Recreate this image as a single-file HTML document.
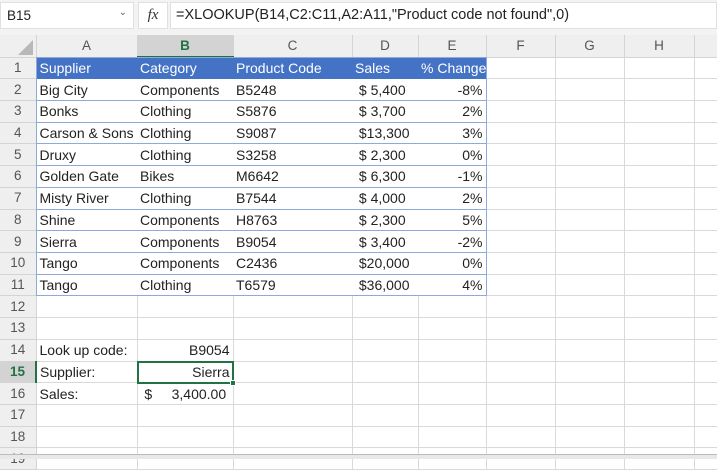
<!DOCTYPE html>
<html><head><meta charset="utf-8">
<style>
*{box-sizing:border-box;margin:0;padding:0}
body{width:717px;height:459px;overflow:hidden;background:#fff;font-family:"Liberation Sans",sans-serif;font-size:14px;color:#222;position:relative}
.fb{position:absolute;top:0;left:0;width:717px;height:35px;background:#f3f3f3}
.nb{position:absolute;left:0;top:2px;width:134px;height:27px;background:#fff;border:1px solid #e0e0e0;padding:5px 6px;font-size:13.5px}
.nb span{position:absolute;right:6px;top:4px;font-size:10px;color:#666}
.fx{position:absolute;left:138px;top:2px;width:30px;height:27px;background:#fff;border:1px solid #e0e0e0;text-align:center;font-family:"Liberation Serif",serif;font-style:italic;font-size:15px;padding-top:4px;color:#333}
.fi{position:absolute;left:170px;top:2px;width:547px;height:27px;background:#fff;border:1px solid #e0e0e0;padding:4px 5px;font-size:14.5px;white-space:nowrap}
table{position:absolute;top:35px;left:0;border-collapse:collapse;table-layout:fixed;width:717px}
td{height:21.73px;border-right:1px solid #d9d9d9;border-bottom:1px solid #d9d9d9;padding:0 3px;white-space:nowrap;overflow:hidden;line-height:20px}
tr.h td{height:22px;background:#efefef;text-align:center;color:#555;border-color:#d4d4d4;font-size:13.5px}
td.rh{background:#efefef;text-align:center;color:#555;border-color:#d4d4d4;padding:0;font-size:13.5px}
tr.h td.sel{background:#d3d3d3;color:#217346;font-weight:bold;border-bottom:2px solid #217346}
td.rsel{background:#d3d3d3;color:#217346;font-weight:bold;border-right:2px solid #217346}
.t1 td.t{background:#4472c4;color:#fff;border-right:none;border-bottom:1px solid #4472c4}
td.t{border-right:none;border-bottom:1px solid #8eaadb}
td.tl{border-right:1px solid #8eaadb !important}
.r{text-align:right}
.sb{position:absolute;left:0;top:454px;width:717px;height:5px;background:#e8e8e8;border-top:1px solid #bbb}
.selbox{position:absolute;left:137px;top:361px;width:97px;height:23px;border:2px solid #217346}
.hd{position:absolute;left:230px;top:380px;width:6px;height:6px;background:#217346;border:1px solid #fff}
.tri{position:absolute;left:18px;top:40px;width:0;height:0;border-left:15px solid transparent;border-bottom:15px solid #b8b8b8}
</style></head><body>
<div class="fb">
<div class="nb">B15<span>&#8964;</span></div>
<div class="fx">fx</div>
<div class="fi">=XLOOKUP(B14,C2:C11,A2:A11,"Product code not found",0)</div>
</div>
<table>
<colgroup><col style="width:36px"><col style="width:101px"><col style="width:96px"><col style="width:119px"><col style="width:66px"><col style="width:68px"><col style="width:69px"><col style="width:69px"><col style="width:70px"><col style="width:23px"></colgroup>
<tr class="h"><td></td><td>A</td><td class="sel">B</td><td>C</td><td>D</td><td>E</td><td>F</td><td>G</td><td>H</td><td></td></tr>
<tr class="t1"><td class="rh">1</td><td class="t">Supplier</td><td class="t">Category</td><td class="t">Product Code</td><td class="t">Sales</td><td class="t r tl">% Change</td><td></td><td></td><td></td><td></td></tr>
<tr><td class="rh">2</td><td class="t">Big City</td><td class="t">Components</td><td class="t">B5248</td><td class="t">&nbsp;$ 5,400</td><td class="t r tl">-8%</td><td></td><td></td><td></td><td></td></tr>
<tr><td class="rh">3</td><td class="t">Bonks</td><td class="t">Clothing</td><td class="t">S5876</td><td class="t">&nbsp;$ 3,700</td><td class="t r tl">2%</td><td></td><td></td><td></td><td></td></tr>
<tr><td class="rh">4</td><td class="t">Carson &amp; Sons</td><td class="t">Clothing</td><td class="t">S9087</td><td class="t">&nbsp;$13,300</td><td class="t r tl">3%</td><td></td><td></td><td></td><td></td></tr>
<tr><td class="rh">5</td><td class="t">Druxy</td><td class="t">Clothing</td><td class="t">S3258</td><td class="t">&nbsp;$ 2,300</td><td class="t r tl">0%</td><td></td><td></td><td></td><td></td></tr>
<tr><td class="rh">6</td><td class="t">Golden Gate</td><td class="t">Bikes</td><td class="t">M6642</td><td class="t">&nbsp;$ 6,300</td><td class="t r tl">-1%</td><td></td><td></td><td></td><td></td></tr>
<tr><td class="rh">7</td><td class="t">Misty River</td><td class="t">Clothing</td><td class="t">B7544</td><td class="t">&nbsp;$ 4,000</td><td class="t r tl">2%</td><td></td><td></td><td></td><td></td></tr>
<tr><td class="rh">8</td><td class="t">Shine</td><td class="t">Components</td><td class="t">H8763</td><td class="t">&nbsp;$ 2,300</td><td class="t r tl">5%</td><td></td><td></td><td></td><td></td></tr>
<tr><td class="rh">9</td><td class="t">Sierra</td><td class="t">Components</td><td class="t">B9054</td><td class="t">&nbsp;$ 3,400</td><td class="t r tl">-2%</td><td></td><td></td><td></td><td></td></tr>
<tr><td class="rh">10</td><td class="t">Tango</td><td class="t">Components</td><td class="t">C2436</td><td class="t">&nbsp;$20,000</td><td class="t r tl">0%</td><td></td><td></td><td></td><td></td></tr>
<tr><td class="rh">11</td><td class="t">Tango</td><td class="t">Clothing</td><td class="t">T6579</td><td class="t">&nbsp;$36,000</td><td class="t r tl">4%</td><td></td><td></td><td></td><td></td></tr>
<tr><td class="rh">12</td><td></td><td></td><td></td><td></td><td></td><td></td><td></td><td></td><td></td></tr>
<tr><td class="rh">13</td><td></td><td></td><td></td><td></td><td></td><td></td><td></td><td></td><td></td></tr>
<tr><td class="rh">14</td><td>Look up code:</td><td class="r">B9054</td><td></td><td></td><td></td><td></td><td></td><td></td><td></td></tr>
<tr><td class="rh rsel">15</td><td>Supplier:</td><td class="r">Sierra</td><td></td><td></td><td></td><td></td><td></td><td></td><td></td></tr>
<tr><td class="rh">16</td><td>Sales:</td><td>&nbsp;$&nbsp;&nbsp;&nbsp;&nbsp; 3,400.00</td><td></td><td></td><td></td><td></td><td></td><td></td><td></td></tr>
<tr><td class="rh">17</td><td></td><td></td><td></td><td></td><td></td><td></td><td></td><td></td><td></td></tr>
<tr><td class="rh">18</td><td></td><td></td><td></td><td></td><td></td><td></td><td></td><td></td><td></td></tr>
<tr><td class="rh">19</td><td></td><td></td><td></td><td></td><td></td><td></td><td></td><td></td><td></td></tr>
</table>
<div style="position:absolute;left:36px;top:57px;width:451px;height:239px;border:1px solid #8eaadb;pointer-events:none"></div>
<div class="tri"></div>
<div class="selbox"></div><div class="hd"></div>
<div class="sb"></div>
</body></html>
